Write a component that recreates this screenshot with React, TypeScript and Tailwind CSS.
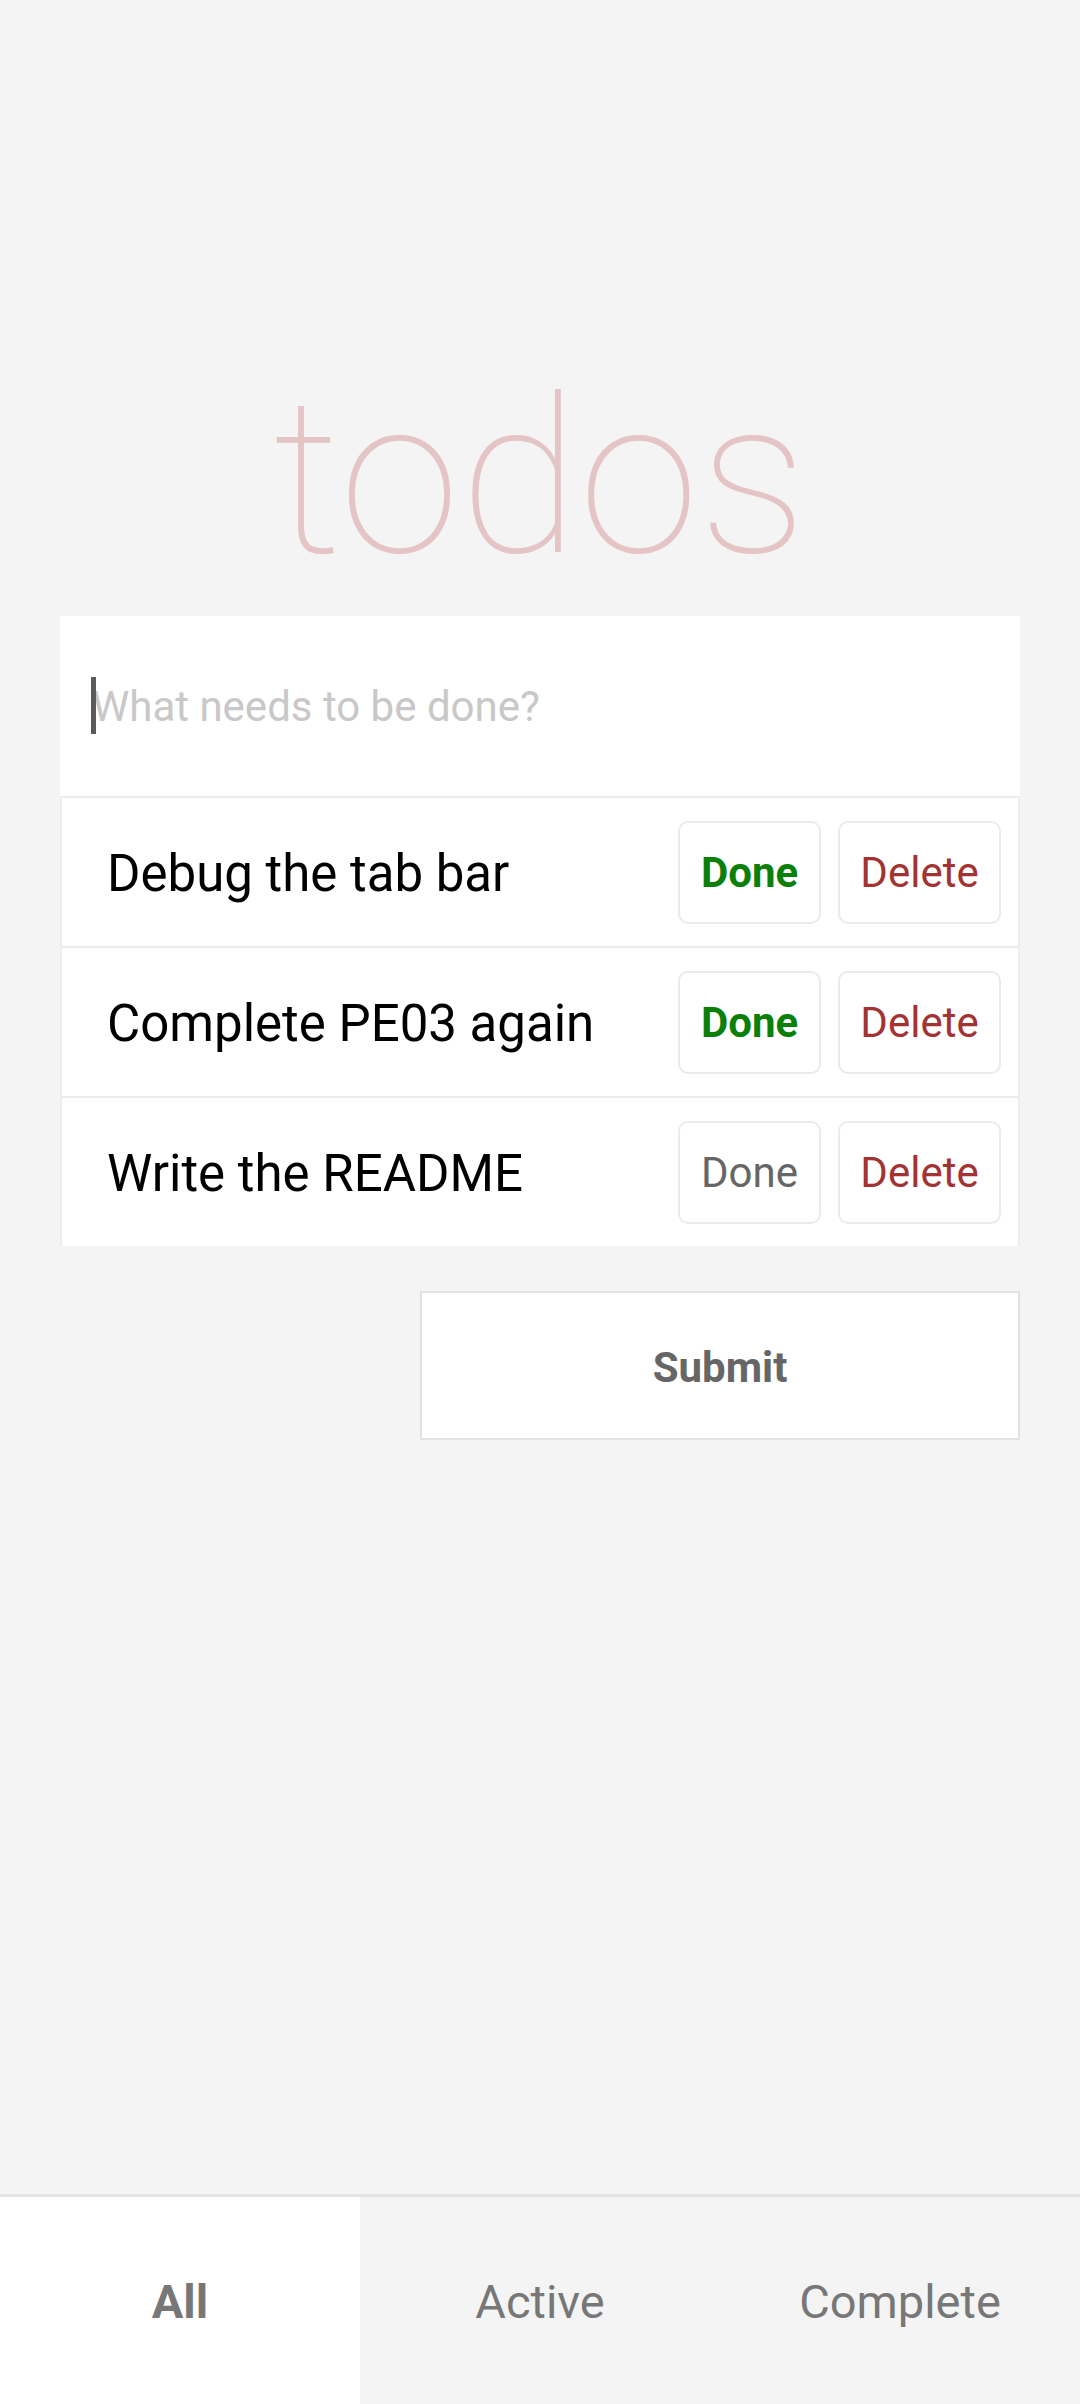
import React from 'react';

type Todo = { id: number; title: string; complete: boolean };

const todos: Todo[] = [
  { id: 1, title: 'Debug the tab bar', complete: true },
  { id: 2, title: 'Complete PE03 again', complete: true },
  { id: 3, title: 'Write the README', complete: false },
];

const tabs = ['All', 'Active', 'Complete'];

function TodoRow({ todo }: { todo: Todo }) {
  return (
    <div className="h-[150px] border-t-2 border-[#ececec] bg-white flex items-center pl-[45px] pr-[17px]">
      <span className="flex-1 text-[51px] text-black pt-[4px]">{todo.title}</span>
      <div className="flex gap-[17px]">
        <button
          className={
            todo.complete
              ? 'h-[103px] w-[143px] rounded-[10px] border-2 border-[#ebebeb] bg-white text-[42px] font-bold text-[#0a800a]'
              : 'h-[103px] w-[143px] rounded-[10px] border-2 border-[#ebebeb] bg-white text-[42px] text-[#666666]'
          }
        >
          Done
        </button>
        <button className="h-[103px] w-[163px] rounded-[10px] border-2 border-[#ebebeb] bg-white text-[42px] text-[#a33333]">
          Delete
        </button>
      </div>
    </div>
  );
}

export default function App() {
  return (
    <div className="min-h-screen h-[2404px] bg-[#f4f4f4] flex flex-col font-['Roboto',sans-serif]">
      <div className="flex-1 flex flex-col px-[60px] pt-[369px]">
        <h1 className="text-center text-[218px] leading-[218px] font-thin text-[#e4c4c4] mb-[29px]">todos</h1>

        <div className="relative h-[180px] bg-white flex items-center pl-[32px]">
          <span className="absolute left-[31px] top-[61px] w-[5px] h-[57px] bg-[#5a5a5a]" />
          <span className="text-[42px] text-[#c8c8c8]">What needs to be done?</span>
        </div>

        <div className="border-x-2 border-[#ececec] flex flex-col">
          {todos.map(t => (
            <TodoRow key={t.id} todo={t} />
          ))}
        </div>

        <div className="flex justify-end mt-[45px]">
          <button className="w-[600px] h-[149px] border-2 border-[#e2e2e2] bg-white text-[42px] font-bold text-[#666666] pt-[3px]">
            Submit
          </button>
        </div>
      </div>

      <div className="h-[210px] border-t-[3px] border-[#e4e4e4] flex">
        {tabs.map((tab, i) => (
          <div
            key={tab}
            className={
              i === 0
                ? 'flex-1 bg-white flex items-center justify-center text-[47px] font-bold text-[#777777] pt-[4px]'
                : 'flex-1 flex items-center justify-center text-[47px] text-[#777777] pt-[4px]'
            }
          >
            {tab}
          </div>
        ))}
      </div>
    </div>
  );
}
